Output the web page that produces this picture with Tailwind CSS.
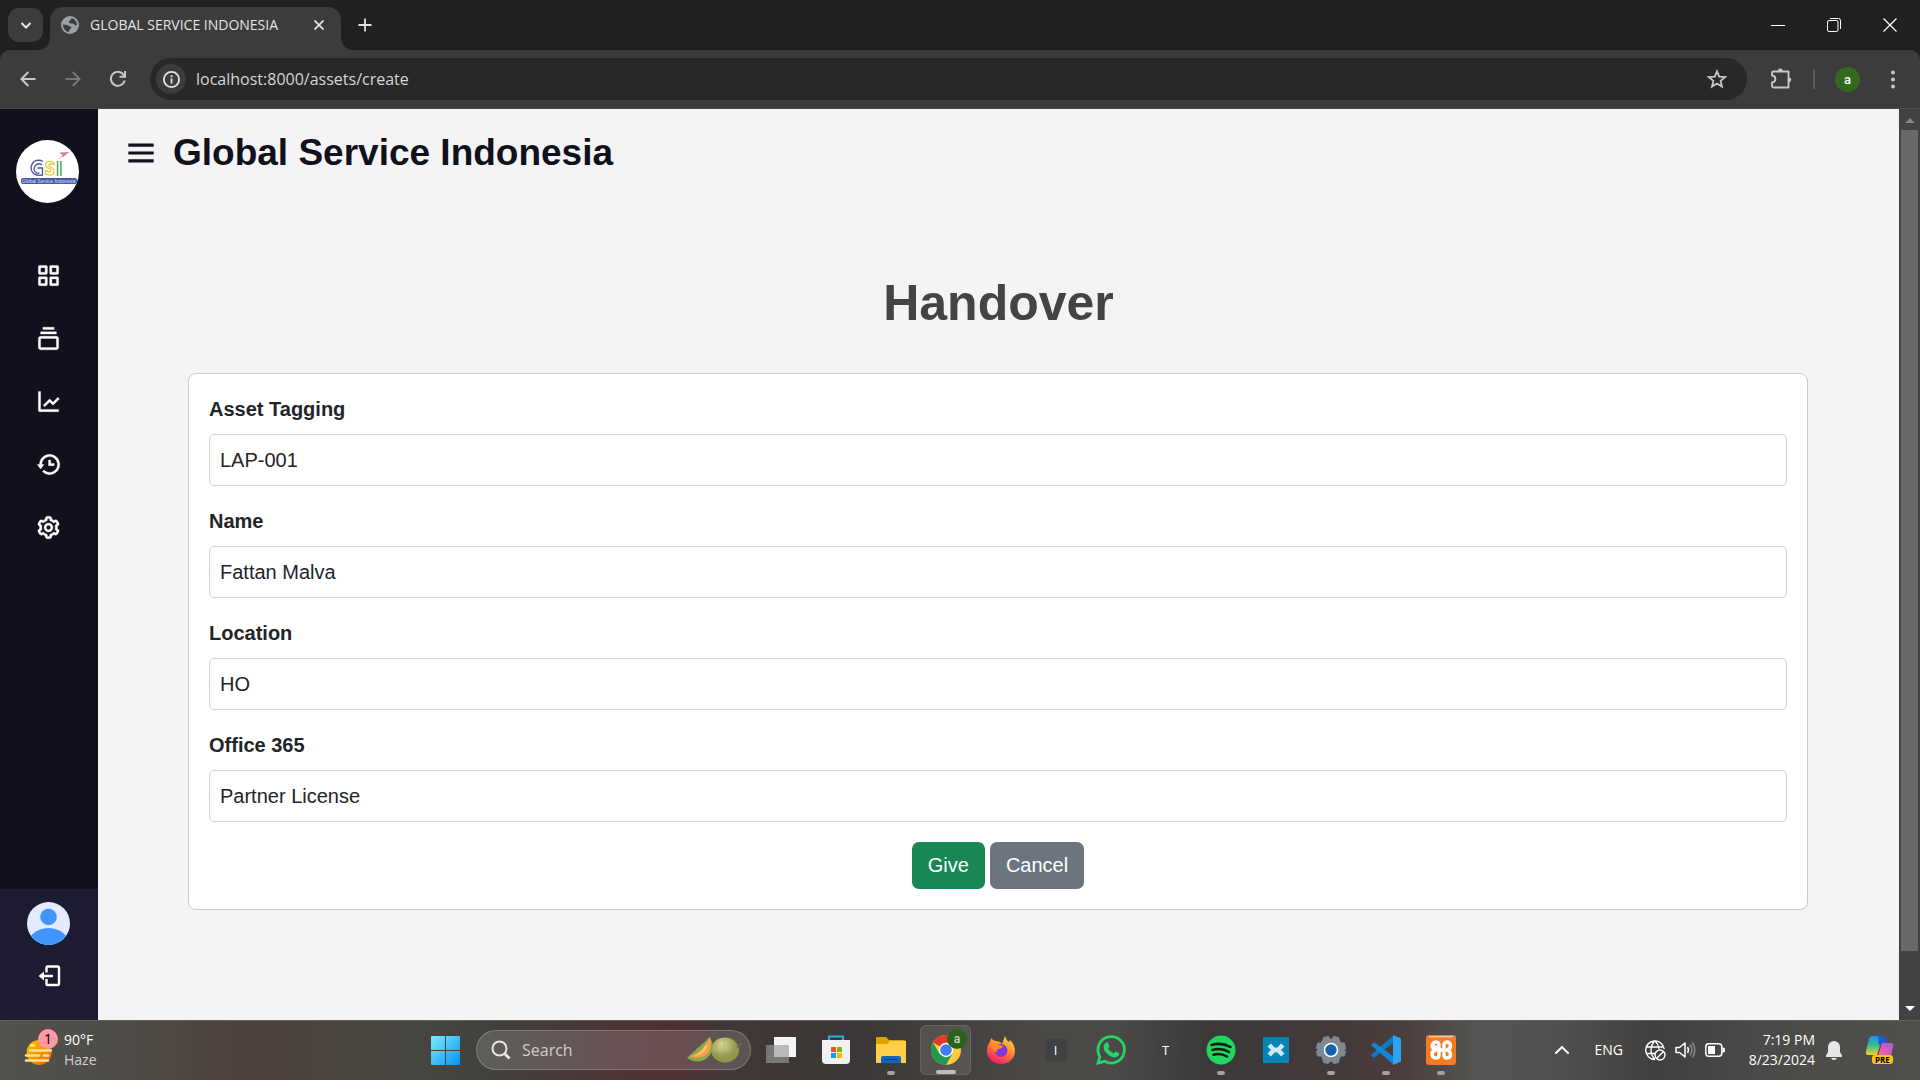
<!DOCTYPE html>
<html lang="en">
<head>
<meta charset="utf-8">
<title>GLOBAL SERVICE INDONESIA</title>
<script src="https://cdn.jsdelivr.net/npm/@tailwindcss/browser@4"></script>
</head>
<body class="flex min-h-screen flex-col overflow-hidden bg-[#f4f4f4] font-['Open_Sans','Noto_Sans',sans-serif]">

<!-- Tab strip -->
<header class="bg-[#1f2120] text-[#e3e3e3]">
  <div class="flex h-[50px] items-end">
    <button aria-label="Search tabs" class="mb-2 ml-2 grid h-[34px] w-[35px] place-items-center rounded-[11px] bg-[#3c3c3c]">
      <svg class="size-3" viewBox="0 0 12 12" fill="none" stroke="currentColor" stroke-width="2"><path d="M1.500 4 6 8.500 10.500 4"/></svg>
    </button>
    <div class="relative ml-[7px] flex h-[43px] w-[291px] items-center rounded-t-[13px] bg-[#3c3c3c] pr-3 pb-[7px] pl-[11px]">
      <svg class="absolute bottom-0 -left-3 size-3 text-[#3c3c3c]" viewBox="0 0 12 12" fill="currentColor"><path d="M12 0v12H0A12 12 0 0 0 12 0z"/></svg>
      <svg class="absolute -right-3 bottom-0 size-3 text-[#3c3c3c]" viewBox="0 0 12 12" fill="currentColor"><path d="M0 0v12h12A12 12 0 0 1 0 0z"/></svg>
      <svg class="size-[18px] shrink-0" viewBox="0 0 18 18"><circle cx="9" cy="9" r="9" fill="#9aa0a6"/><path d="M2 8.500c2 0 2.500.5 4 .5s1.500 1.500 3 1.500 1.800 1 .8 2-1.800 1.300-1.800 3.500C4.500 15.600 2 12.500 2 8.500zM10.500 2.200C13.500 2.800 16 5.500 16 9c-1.200.8-2.500.3-3-.7s-1.700-.8-2.800-.8-2.700-.6-2.200-2S10 4.500 10.500 2.200z" fill="#3c3c3c"/></svg>
      <span class="ml-[11px] flex-1 text-sm whitespace-nowrap">GLOBAL SERVICE INDONESIA</span>
      <button aria-label="Close tab" class="grid size-5 place-items-center"><svg class="size-[10px]" viewBox="0 0 10 10" stroke="currentColor" stroke-width="1.800"><path d="m.5.5 9 9m0-9-9 9"/></svg></button>
    </div>
    <button aria-label="New tab" class="mb-[15px] ml-[14px] grid size-5 place-items-center"><svg class="size-[14px]" viewBox="0 0 14 14" stroke="currentColor" stroke-width="1.800"><path d="M7 .5v13M.5 7h13"/></svg></button>
    <div class="mb-[15px] ml-auto flex items-center gap-10 pr-[22px] text-white">
      <button aria-label="Minimize" class="grid h-5 w-4 place-items-center"><svg class="h-[13px] w-[14px]" viewBox="0 0 14 13" stroke="currentColor"><path d="M0 6.500h14"/></svg></button>
      <button aria-label="Restore" class="grid h-5 w-4 place-items-center"><svg class="size-[14px]" viewBox="0 0 14 14" fill="none" stroke="currentColor"><rect x=".5" y="2.500" width="10.500" height="11" rx="1.500"/><path d="M3 .5h8.500a2 2 0 0 1 2 2V11"/></svg></button>
      <button aria-label="Close" class="grid h-5 w-4 place-items-center"><svg class="size-[14px]" viewBox="0 0 14 14" stroke="currentColor" stroke-width="1.200"><path d="m.5.5 13 13m0-13-13 13"/></svg></button>
    </div>
  </div>

  <!-- Address bar -->
  <div class="flex h-[59px] items-center rounded-t-[10px] border-b border-[#4b4b4b] bg-[#3c3c3c] text-[#c7c7c7]">
    <nav class="flex w-[150px] items-center gap-[29px] pl-5">
      <button aria-label="Back"><svg class="size-4" viewBox="0 0 16 16" fill="none" stroke="currentColor" stroke-width="2"><path d="M15.500 8H1.500M8.300 1 1.500 8l6.800 7"/></svg></button>
      <button aria-label="Forward" class="text-[#777]"><svg class="size-4" viewBox="0 0 16 16" fill="none" stroke="currentColor" stroke-width="2"><path d="M.5 8h14M7.700 1l6.800 7-6.800 7"/></svg></button>
      <button aria-label="Reload"><svg class="size-4" viewBox="0 0 16 16" fill="none" stroke="currentColor" stroke-width="2"><path d="M14.700 9.500A7 7 0 1 1 13.500 3.600L15 5.300M15 0v5.700H9.500"/></svg></button>
    </nav>
    <div class="flex h-[42px] flex-1 items-center rounded-full bg-[#282828] pr-5 pl-[6px]">
      <button aria-label="Site information" class="grid size-[30px] place-items-center rounded-full bg-[#3c3c3c] text-[#e3e3e3]"><svg class="size-[17px]" viewBox="0 0 17 17" fill="none" stroke="currentColor" stroke-width="1.800"><circle cx="8.500" cy="8.500" r="7.600"/><path d="M8.500 7.500v5M8.500 4.300v2"/></svg></button>
      <input aria-label="Address" value="localhost:8000/assets/create" class="ml-[10px] h-8 flex-1 bg-transparent text-base text-[#d5d5d5] outline-none">
      <button aria-label="Bookmark"><svg class="size-5" viewBox="0 0 20 20" fill="none" stroke="currentColor" stroke-width="1.800"><path d="m10 2.300 2.200 5.400 5.900.4-4.500 3.800 1.400 5.700-5-3.100-5 3.100 1.400-5.700L1.900 8.100l5.900-.4z"/></svg></button>
    </div>
    <div class="flex w-[173px] items-center pl-[23px]">
      <button aria-label="Extensions"><svg class="size-[22px]" viewBox="0 0 22 22"><path d="M3.500 3.500h15v16h-15a1.500 1.500 0 0 1-1.500-1.500v-3.500c4.500-.5 4.500-6.500 0-7V5a1.500 1.500 0 0 1 1.500-1.500z" fill="none" stroke="currentColor" stroke-width="1.900" stroke-linejoin="round"/><path d="M7.800 3a2.500 2.500 0 0 1 5 0zM19 9.500a2.300 2.300 0 0 1 0 4.600z" fill="currentColor"/></svg></button>
      <span class="ml-[21px] h-5 w-[2px] bg-[#5c5c5c]"></span>
      <button class="ml-[20px] grid size-[25px] place-items-center rounded-full bg-[#33691e] font-[Roboto,sans-serif] text-[13px] leading-none font-medium text-white">a</button>
      <button aria-label="Menu" class="ml-[31px]"><svg class="h-[19px] w-1" viewBox="0 0 4 19" fill="currentColor"><circle cx="2" cy="2.500" r="2"/><circle cx="2" cy="9.500" r="2"/><circle cx="2" cy="16.500" r="2"/></svg></button>
    </div>
  </div>
</header>

<!-- Web page -->
<div class="flex flex-1 font-['Liberation_Sans',Arial,sans-serif]">
  <aside class="flex w-[98px] shrink-0 flex-col items-center bg-[#11101d] text-white">
    <svg class="mt-[31px] mr-[3px] size-[63px]" viewBox="0 0 63 63">
      <circle cx="31.500" cy="31.500" r="31.500" fill="#fff"/>
      <g fill="none" stroke-width="1.300">
        <path stroke="#4656a8" d="M27 21.500q-4-2.500-9 0-4 4-2.500 9 2.500 6 11 4.500V28h-5M26 25q-3-2.500-6 0-3 3-1.500 6 2 3 5 2"/>
        <path stroke="#efcb36" d="M38 22.500q-7-3-8.500 1.500 0 3.500 4 4.500 3 1.500 0 3.500l-4-1.500v3.500q7 3 8.500-1.500.5-4-3.500-5.500-3.500-2 .5-3l3 .5z"/>
        <path stroke="#45ae58" stroke-width="1.500" d="M41.600 21v15M44.900 21v15"/>
      </g>
      <path fill="#d77bb4" d="m43 12.500 10.500-.5-7 5.500-.5-3z"/><path stroke="#d77bb4" stroke-width=".7" d="m46 16-3 3"/>
      <rect x="5" y="38" width="56" height="6" rx="2" fill="#4656a8"/>
      <text x="6" y="43" fill="#dfe4ff" font-family="Liberation Sans" font-size="4.800">Global Service Indonesia</text>
    </svg>
    <nav class="mt-[59px] mr-px flex flex-col gap-9">
      <a href="#" aria-label="Dashboard"><svg class="size-[27px]" viewBox="0 0 24 24" fill="currentColor" stroke="currentColor" stroke-width=".3"><path d="M10 3H4a1 1 0 0 0-1 1v6a1 1 0 0 0 1 1h6a1 1 0 0 0 1-1V4a1 1 0 0 0-1-1zM9 9H5V5h4v4zm11-6h-6a1 1 0 0 0-1 1v6a1 1 0 0 0 1 1h6a1 1 0 0 0 1-1V4a1 1 0 0 0-1-1zm-1 6h-4V5h4v4zm-9 4H4a1 1 0 0 0-1 1v6a1 1 0 0 0 1 1h6a1 1 0 0 0 1-1v-6a1 1 0 0 0-1-1zm-1 6H5v-4h4v4zm11-6h-6a1 1 0 0 0-1 1v6a1 1 0 0 0 1 1h6a1 1 0 0 0 1-1v-6a1 1 0 0 0-1-1zm-1 6h-4v-4h4v4z"/></svg></a>
      <a href="#" aria-label="Assets"><svg class="size-[27px]" viewBox="0 0 24 24" fill="currentColor" stroke="currentColor" stroke-width=".3"><path d="M19 10H5c-1.103 0-2 .897-2 2v8c0 1.103.897 2 2 2h14c1.103 0 2-.897 2-2v-8c0-1.103-.897-2-2-2zM5 20v-8h14l.002 8H5zM5 6h14v2H5zm2-4h10v2H7z"/></svg></a>
      <a href="#" aria-label="Reports"><svg class="size-[27px]" viewBox="0 0 24 24" fill="currentColor" stroke="currentColor" stroke-width=".3"><path d="M3 3v17a1 1 0 0 0 1 1h17v-2H5V3H3z"/><path d="M15.293 14.707a.999.999 0 0 0 1.414 0l5-5-1.414-1.414L16 12.586l-2.293-2.293a.999.999 0 0 0-1.414 0l-5 5 1.414 1.414L13 12.414l2.293 2.293z"/></svg></a>
      <a href="#" aria-label="History"><svg class="size-[27px]" viewBox="0 0 24 24" fill="currentColor" stroke="currentColor" stroke-width=".3"><path d="M12 8v5h5v-2h-3V8z"/><path d="M21.292 8.497a8.957 8.957 0 0 0-1.928-2.862 9.004 9.004 0 0 0-4.550-2.452 9.090 9.090 0 0 0-3.626 0 8.965 8.965 0 0 0-4.552 2.453 9.048 9.048 0 0 0-1.928 2.860A8.963 8.963 0 0 0 4 12l.001.025H2L5 16l3-3.975H6.001L6 12a6.957 6.957 0 0 1 1.195-3.913 7.066 7.066 0 0 1 1.891-1.892 7.034 7.034 0 0 1 2.503-1.054 7.003 7.003 0 0 1 8.269 5.445 7.117 7.117 0 0 1 0 2.824 6.936 6.936 0 0 1-1.054 2.503c-.25.371-.537.72-.854 1.036a7.058 7.058 0 0 1-2.225 1.501 6.980 6.980 0 0 1-1.313.408 7.117 7.117 0 0 1-2.823 0 6.957 6.957 0 0 1-2.501-1.053 7.066 7.066 0 0 1-1.037-.855l-1.414 1.414A8.985 8.985 0 0 0 13 21a9.050 9.050 0 0 0 3.503-.707 9.009 9.009 0 0 0 3.959-3.260A8.968 8.968 0 0 0 22 12a8.928 8.928 0 0 0-.708-3.503z"/></svg></a>
      <a href="#" aria-label="Settings"><svg class="size-[27px]" viewBox="0 0 24 24" fill="currentColor" stroke="currentColor" stroke-width=".3"><path d="M12 16c2.206 0 4-1.794 4-4s-1.794-4-4-4-4 1.794-4 4 1.794 4 4 4zm0-6c1.084 0 2 .916 2 2s-.916 2-2 2-2-.916-2-2 .916-2 2-2z"/><path d="m2.845 16.136 1 1.730c.531.917 1.809 1.261 2.730.73l.529-.306A8.100 8.100 0 0 0 9 19.402V20c0 1.103.897 2 2 2h2c1.103 0 2-.897 2-2v-.598a8.132 8.132 0 0 0 1.896-1.111l.529.306c.923.53 2.198.188 2.731-.731l.999-1.729a2.001 2.001 0 0 0-.731-2.732l-.505-.292a7.718 7.718 0 0 0 0-2.224l.505-.292a2.002 2.002 0 0 0 .731-2.732l-.999-1.729c-.531-.92-1.808-1.265-2.731-.732l-.529.306A8.100 8.100 0 0 0 15 4.598V4c0-1.103-.897-2-2-2h-2c-1.103 0-2 .897-2 2v.598a8.132 8.132 0 0 0-1.896 1.111l-.529-.306c-.924-.531-2.200-.187-2.731.732l-.999 1.729a2.001 2.001 0 0 0 .731 2.732l.505.292a7.683 7.683 0 0 0 0 2.223l-.505.292a2.003 2.003 0 0 0-.731 2.733zm3.326-2.758A5.703 5.703 0 0 1 6 12c0-.462.058-.926.17-1.378a.999.999 0 0 0-.47-1.108l-1.123-.65.998-1.729 1.145.662a.997.997 0 0 0 1.188-.142 6.071 6.071 0 0 1 2.384-1.399A1 1 0 0 0 11 5.300V4h2v1.300a1 1 0 0 0 .708.956 6.083 6.083 0 0 1 2.384 1.399.999.999 0 0 0 1.188.142l1.144-.661 1 1.729-1.124.649a1 1 0 0 0-.47 1.108c.112.452.17.916.17 1.378 0 .461-.058.925-.171 1.378a1 1 0 0 0 .471 1.108l1.123.649-.998 1.729-1.145-.661a.996.996 0 0 0-1.188.142 6.071 6.071 0 0 1-2.384 1.399A1 1 0 0 0 13 18.700l.002 1.300H11v-1.300a1 1 0 0 0-.708-.956 6.083 6.083 0 0 1-2.384-1.399.992.992 0 0 0-1.188-.141l-1.144.662-1-1.729 1.124-.651a1 1 0 0 0 .471-1.108z"/></svg></a>
    </nav>
    <div class="mt-auto flex h-[131px] w-full flex-col items-center gap-[19px] bg-[#1d1b31] pt-[13px] pr-px">
      <svg class="size-[43px]" viewBox="0 0 43 43"><clipPath id="av"><circle cx="21.500" cy="21.500" r="21.500"/></clipPath><g clip-path="url(#av)"><path fill="#e4eaff" d="M0 0h43v43H0z"/><circle cx="21.500" cy="15" r="8.300" fill="#4294ff"/><ellipse cx="21.500" cy="46" rx="22" ry="20" fill="#4294ff"/></g></svg>
      <a href="#" aria-label="Log out"><svg class="size-6" viewBox="0 0 24 24"><path d="M9.500 8.500V3.500A1 1 0 0 1 10.500 2.500h10a1.500 1.500 0 0 1 1.500 1.500v15.500a1.500 1.500 0 0 1-1.500 1.500h-10a1 1 0 0 1-1-1V15" fill="none" stroke="#fff" stroke-width="2.400"/><path fill="#fff" d="m1.500 12 5.500-4.500v3.300H16v2.400H7v3.300z"/></svg></a>
    </div>
  </aside>

  <main class="flex-1">
    <div class="flex items-center gap-[13px] pt-4 pl-6 text-[#11101d]">
      <button aria-label="Toggle sidebar"><svg class="size-[38px]" viewBox="0 0 24 24" fill="currentColor"><path d="M4 6h16v2H4zm0 5h16v2H4zm0 5h16v2H4z"/></svg></button>
      <span class="text-[37px] leading-[56px] font-bold">Global Service Indonesia</span>
    </div>
    <h1 class="mt-[92px] text-center text-[50px] leading-[60px] font-bold text-[#444]">Handover</h1>
    <form class="mr-[91px] ml-[90px] mt-10 rounded-lg border border-[#ccc] bg-white p-5 text-xl leading-[30px] text-[#212529]">
      <div class="mb-5"><label for="tag" class="mb-[10px] block font-bold">Asset Tagging</label><input id="tag" value="LAP-001" class="block h-[52px] w-full rounded-[5px] border border-[#ced4da] px-[10px] outline-none"></div>
      <div class="mb-5"><label for="name" class="mb-[10px] block font-bold">Name</label><input id="name" value="Fattan Malva" class="block h-[52px] w-full rounded-[5px] border border-[#ced4da] px-[10px] outline-none"></div>
      <div class="mb-5"><label for="loc" class="mb-[10px] block font-bold">Location</label><input id="loc" value="HO" class="block h-[52px] w-full rounded-[5px] border border-[#ced4da] px-[10px] outline-none"></div>
      <div class="mb-5"><label for="office" class="mb-[10px] block font-bold">Office 365</label><input id="office" value="Partner License" class="block h-[52px] w-full rounded-[5px] border border-[#ced4da] px-[10px] outline-none"></div>
      <div class="flex justify-center gap-[5px] text-white">
        <button type="submit" class="h-[47px] rounded-[7px] bg-[#198754] px-4 pb-px">Give</button>
        <button type="button" class="h-[47px] rounded-[7px] bg-[#6c757d] px-4 pb-px">Cancel</button>
      </div>
    </form>
  </main>

  <!-- Scrollbar -->
  <div class="flex w-[21px] shrink-0 flex-col items-center bg-[#424242]">
    <svg class="h-[21px] w-[10px] text-[#858585]" viewBox="0 0 10 21" fill="currentColor"><path d="M0 14 5 9l5 5z"/></svg>
    <div class="w-[17px] flex-1 bg-[#686868]"></div>
    <svg class="mt-12 h-[21px] w-[10px] text-white" viewBox="0 0 10 21" fill="currentColor"><path d="m0 7 5 5 5-5z"/></svg>
  </div>
</div>

<!-- Taskbar -->
<footer class="flex h-[60px] items-center border-t border-[#62605c] bg-[linear-gradient(90deg,#53524c_0%,#4e4c47_6%,#4f423d_12%,#4c423e_15%,#484741_21%,#42403c_26%,#4c3435_32%,#502f32_35%,#403736_38%,#3b3736_45%,#4b4946_54%,#4b4a48_58%,#3b3938_63%,#44393a_70%,#4b3e3c_73%,#545553_77%,#52514f_81%,#41403e_86%,#4b4a48_92%,#52504a_100%)] pb-px text-white">
  <div class="flex w-[418px] items-center gap-3 pl-6">
    <div class="relative h-9 w-7">
      <svg class="h-9 w-7" viewBox="0 0 28 36"><defs><linearGradient id="sun" x1="0" y1="0" x2="1" y2="1"><stop stop-color="#ffc400"/><stop offset="1" stop-color="#e86509"/></linearGradient></defs><circle cx="15" cy="20.500" r="12.500" fill="url(#sun)"/><g stroke="#ffe193" stroke-width="2.600" stroke-linecap="round"><path d="M7 13.500h3M6 18.500h23M2 23.500h13M20 23.500h4M2 28.500h22"/></g></svg>
      <span class="absolute -top-[3px] left-[14px] grid size-5 place-items-center rounded-full bg-[#ff99a4] text-sm leading-none text-black">1</span>
    </div>
    <div class="text-sm leading-5"><div>90°F</div><div class="text-[#d0cfcd]">Haze</div></div>
  </div>

  <button aria-label="Start" class="grid w-[55px] place-items-center"><svg class="size-[29px]" viewBox="0 0 29 29"><defs><linearGradient id="win" x1="0" y1="0" x2="1" y2="1"><stop stop-color="#78edff"/><stop offset="1" stop-color="#0a91f5"/></linearGradient></defs><path fill="url(#win)" d="M1 0h13v14H0V1a1 1 0 0 1 1-1zM15 0h13a1 1 0 0 1 1 1v13H15zM0 15h14v14H1a1 1 0 0 1-1-1zM15 15h14v13a1 1 0 0 1-1 1H15z"/></svg></button>
  <label class="ml-[3px] flex h-10 w-[275px] items-center rounded-full border border-white/20 bg-white/15 pr-2 pl-[14px]">
    <svg class="size-5 shrink-0" viewBox="0 0 20 20" fill="none" stroke="#e5e5ea" stroke-width="2"><circle cx="8.500" cy="8.500" r="7"/><path d="m13.500 13.500 5 5" stroke-width="2.800"/></svg>
    <input aria-label="Search" placeholder="Search" class="ml-[11px] w-0 flex-1 bg-transparent text-base text-white outline-none placeholder:text-[#d2cccb]">
    <svg class="h-7 w-[55px]" viewBox="0 0 55 28"><defs><radialGradient id="mel" cx=".4" cy=".3"><stop stop-color="#dbd99a"/><stop offset="1" stop-color="#94964a"/></radialGradient></defs><ellipse cx="38" cy="14" rx="14" ry="12.500" fill="url(#mel)"/><path d="M31 4q-5 10 0 20M38 2q-3 12 0 24M45 4q4 10 0 20M25 10h26M25 18h26" fill="none" stroke="#84914a" stroke-opacity=".2"/><path d="M50 11q2-1 5-4" stroke="#4b7b3a" stroke-width="2" fill="none"/><path fill="#8aa84f" d="M23 1q7 13-3 21-9 7-20 0l3-3z"/><path fill="#ff9d43" d="M22 1q5 11-3 18-7 5-17 1 7-1 11-5 7-5 9-14z"/><path fill="#ffc078" d="M20 7q0 8-6 11-4 2-8 2 7-3 9-6z"/></svg>
  </label>

  <div class="ml-[2px] flex h-full items-center">
    <button aria-label="Task view" class="grid w-[55px] place-items-center"><svg class="h-[29px] w-[30px]" viewBox="0 0 30 29"><path fill="#777" d="M0 9h23v18H0z"/><path fill="#f4f4f4" d="M8 1h22v20H8z"/><path fill="#b9b9b9" d="M8 9h15v12H8z"/></svg></button>
    <button aria-label="Microsoft Store" class="grid w-[55px] place-items-center"><svg class="size-[30px]" viewBox="0 0 30 30"><path d="M8 6V1.500h14V6" fill="none" stroke="#22b3ee" stroke-width="2"/><path fill="#f1f1f1" d="M1 5h28v20a4 4 0 0 1-4 4H5a4 4 0 0 1-4-4z"/><path fill="#f25022" d="M10 12h5v5h-5z"/><path fill="#7fba00" d="M16 12h5v5h-5z"/><path fill="#00a4ef" d="M10 18h5v5h-5z"/><path fill="#ffb900" d="M16 18h5v5h-5z"/></svg></button>
    <button aria-label="File Explorer" class="relative grid h-[50px] w-[55px] place-items-center"><svg class="size-[30px]" viewBox="0 0 30 30"><path fill="#e0a100" d="M0 3a1 1 0 0 1 1-1h9l3 3h15a1 1 0 0 1 1 1v9H0z"/><path fill="#ffcf48" d="M0 9h11l3-3h16v22H0z"/><path fill="#0c68c0" d="M5 28v-5a2 2 0 0 1 2-2h16a2 2 0 0 1 2 2v5z"/><path stroke="#063f7d" d="M8.500 24.500h13"/></svg><span class="absolute bottom-0 h-1 w-2 rounded-full bg-[#a3a2a0]"></span></button>
    <button aria-label="Chrome" class="relative mx-[2px] grid h-[50px] w-[51px] place-items-center rounded-md border border-white/10 bg-white/10"><svg class="size-[30px]" viewBox="0 0 30 30"><circle cx="15" cy="15" r="15" fill="#ffcd3c"/><path fill="#e33b2e" d="M15 15 2 7.500A15 15 0 0 1 28 7.500H15z"/><path fill="#1f9a50" d="M2 7.500A15 15 0 0 0 15 30l6.500-11.200L15 15 8.500 18.700z"/><circle cx="15" cy="15" r="7.200" fill="#fff"/><circle cx="15" cy="15" r="5.800" fill="#3c7ff0"/></svg><span class="absolute top-[3px] right-[3px] grid size-5 place-items-center rounded-full bg-[#2c611c] font-[Roboto,sans-serif] text-xs leading-none font-medium text-[#c9d8c4]">a</span><span class="absolute bottom-0 h-1 w-5 rounded-full bg-[#bdbcbb]"></span></button>
    <button aria-label="Firefox" class="grid w-[55px] place-items-center"><svg class="size-[30px]" viewBox="0 0 30 30"><defs><linearGradient id="fox" x1=".8" y1="0" x2=".3" y2="1"><stop stop-color="#ffe24a"/><stop offset=".45" stop-color="#ff8a2a"/><stop offset="1" stop-color="#f5176b"/></linearGradient></defs><path fill="url(#fox)" d="M19 1q1 4 4 6 1-1 1-2 5 5 5 11a14 13 0 0 1-28 0Q1 10 4 7l1-4q2 3 5 3 4 0 6 3 2-5 3-8z"/><circle cx="15" cy="15.500" r="6.500" fill="#8338d8"/><path fill="#ff8a2a" d="M4 9q6-2 9 1l4 1q-1 3-5 3-2 1-1 3-5-1-7-8z"/></svg></button>
    <button aria-label="App I" class="grid w-[55px] place-items-center"><span class="grid size-[22px] place-items-center bg-[#404142] text-[13px] leading-none">I</span></button>
    <button aria-label="WhatsApp" class="grid w-[55px] place-items-center"><svg class="size-[30px]" viewBox="0 0 30 30"><path d="M2 28l1.800-6.500A13.200 13.200 0 1 1 8.700 26.300z" fill="none" stroke="#25d366" stroke-width="2.800"/><path fill="#25d366" d="M10 7.500q1-.5 1.800 0l1.600 3.800q0 1-1.400 2.300 2 3.500 5.700 4.800 1-1.400 1.800-2l3.500 1.700q.5 3.700-4 4.400-3.500 0-7.500-3.500T7.700 12.500Q7.700 9 10 7.500z"/></svg></button>
    <button aria-label="App T" class="grid w-[55px] place-items-center"><span class="grid size-[22px] place-items-center bg-[#404142] text-[13px] leading-none">T</span></button>
    <button aria-label="Spotify" class="relative grid h-[50px] w-[55px] place-items-center"><svg class="size-[30px]" viewBox="0 0 30 30"><circle cx="15" cy="15" r="14.500" fill="#1fd760"/><path d="M5.500 10q10-3 19 2M6.500 15q9-2.500 16.500 2M7.500 19.700q7-2 13.500 1.800" fill="none" stroke="#0c1b11" stroke-width="2.500" stroke-linecap="round"/></svg><span class="absolute bottom-0 h-1 w-2 rounded-full bg-[#a3a2a0]"></span></button>
    <button aria-label="App X" class="grid w-[55px] place-items-center"><svg class="size-[26px]" viewBox="0 0 26 26"><path fill="#0783b5" d="M0 0h26v26H0z"/><path fill="#cfeaf5" d="M4.500 9.500 8 6.500l3.500 4h3l3.500-4 3.500 3-3.500 3.500 3.500 3.500-3.500 3-3.500-4h-3l-3.500 4-3.500-3L8 13z"/></svg></button>
    <button aria-label="Settings app" class="relative grid h-[50px] w-[55px] place-items-center"><svg class="size-[30px]" viewBox="0 0 30 30"><path fill="#7f8790" stroke="#7f8790" stroke-width="2" stroke-linejoin="round" d="m7 6 1-3 4-1 2 3h2l2-3 4 1 1 3 1.500 2.500H28l1 5-2.500 1.500L29 16.500l-1 4h-3.500L23 23l-1 4-4 1-2-2.500h-2L12 28l-4-1-1-4-1.500-2.500H2l-1-4L3.500 15 1 13l1-4.500h3.500z"/><circle cx="15" cy="15" r="6.500" fill="#1361b0" stroke="#fff" stroke-width="1.600"/></svg><span class="absolute bottom-0 h-1 w-2 rounded-full bg-[#a3a2a0]"></span></button>
    <button aria-label="VS Code" class="relative grid h-[50px] w-[55px] place-items-center"><svg class="size-[30px]" viewBox="0 0 30 30"><path fill="#0a7bc9" d="m0 20 2.500 2.500 1 0L23 7V0z"/><path fill="#1186d4" d="M0 10 2.500 7.500h1L23 22v8z"/><path fill="#2ba4f2" d="m22 0 7 3q1 .5 1 1.500v21q0 1-1 1.500l-7 3z"/></svg><span class="absolute bottom-0 h-1 w-2 rounded-full bg-[#a3a2a0]"></span></button>
    <button aria-label="XAMPP" class="relative grid h-[50px] w-[55px] place-items-center"><svg class="size-[30px]" viewBox="0 0 30 30"><rect width="30" height="30" rx="3" fill="#f47b22"/><path fill="#ffc28f" d="M3 1h24v1.500H3z"/><path d="M10 12.500V12a3 3 0 0 1-3-3.500Q8 7 10 7q3 0 3 3v5h5v-5q0-3 3-3 3.500.5 3.500 3.500Q24.500 14 21 15q3.500 1 3.500 4.500Q24.500 23 21 23q-3 0-3-3v-5h-5v5q0 3-3 3-4 0-4-4 0-3 4-4-4-1-4-5" fill="none" stroke="#fff" stroke-width="3.400" stroke-linecap="round" stroke-linejoin="round"/></svg><span class="absolute bottom-0 h-1 w-2 rounded-full bg-[#a3a2a0]"></span></button>
  </div>

  <div class="ml-auto flex items-center pr-[25px]">
    <button aria-label="Hidden icons" class="mr-[26px]"><svg class="h-2 w-[14px]" viewBox="0 0 14 8" fill="none" stroke="currentColor" stroke-width="2" stroke-linecap="round"><path d="m1 7 6-6 6 6"/></svg></button>
    <button class="mr-[22px] text-sm">ENG</button>
    <div class="mr-[10px] flex w-[160px] items-center">
      <svg class="size-[21px]" viewBox="0 0 21 21" fill="none" stroke="currentColor" stroke-width="1.400"><path d="M10 19.500A9.300 9.300 0 1 1 19.200 9M10 19.500q-4-4-4-9.400T10 .8q3.500 3.500 4 8M1.500 7h17.500M1.500 13.500H10"/><circle cx="15" cy="15" r="5"/><path d="m11.500 18.500 7-7"/></svg>
      <svg class="ml-[9px] h-[18px] w-[21px]" viewBox="0 0 21 18" fill="none" stroke="currentColor" stroke-width="1.500"><path d="M1 6.500h3.500L10 2v14l-5.500-4.500H1z" stroke-linejoin="round"/><path d="M12.500 6q2 3 0 6"/><path d="M15 3.500q4 5.500 0 11M17.300 1.500q5 7.500 0 15" stroke="#888"/></svg>
      <svg class="ml-[9px] h-[14px] w-5" viewBox="0 0 20 14"><rect x=".8" y=".8" width="16" height="12.400" rx="3" fill="none" stroke="#fff" stroke-width="1.500"/><path fill="#fff" d="M3 3h7v8H3zM17.500 4.500h1a1.500 1.500 0 0 1 1.500 1.500v2a1.500 1.500 0 0 1-1.500 1.500h-1z"/></svg>
    </div>
    <div class="-ml-[90px] w-[90px] text-right text-sm leading-5 whitespace-nowrap"><div>7:19 PM</div><div>8/23/2024</div></div>
    <svg class="ml-[11px] h-[19px] w-4" viewBox="0 0 16 19" fill="#e6e6e6"><path d="M8 0a6 6 0 0 1 6 6v5l2 3.500V16H0v-1.500L2 11V6a6 6 0 0 1 6-6zM5 17h6q-1 2-3 2t-3-2z"/></svg>
    <div class="relative ml-[23px] h-[30px] w-[30px]">
      <svg class="size-[30px]" viewBox="0 0 30 30"><defs><linearGradient id="cpa" x1="0" y1="0" x2="0" y2="1"><stop stop-color="#1793f0"/><stop offset=".5" stop-color="#3bbf8a"/><stop offset="1" stop-color="#f5d02c"/></linearGradient><linearGradient id="cpb" x1="1" y1="0" x2="0" y2="1"><stop stop-color="#9a61e8"/><stop offset=".5" stop-color="#e85aa5"/><stop offset="1" stop-color="#ff8b4a"/></linearGradient></defs><path fill="url(#cpb)" d="M17 8h9q3 0 2 4l-2 9q-1 4-4 4H8q4 0 5-4z"/><path fill="url(#cpa)" d="M7 1h11l-6 19H3q-3 0-2-4L4 4q1-3 3-3z"/><path fill="#1c5bd8" d="M13 1h5q3 0 4 7h-4q-3 0-4 3z"/></svg>
      <span class="absolute top-5 left-[7px] rounded-[3px] bg-[#f9c512] px-[3px] text-[8px] leading-[9px] font-bold text-black">PRE</span>
    </div>
  </div>
</footer>
</body>
</html>
